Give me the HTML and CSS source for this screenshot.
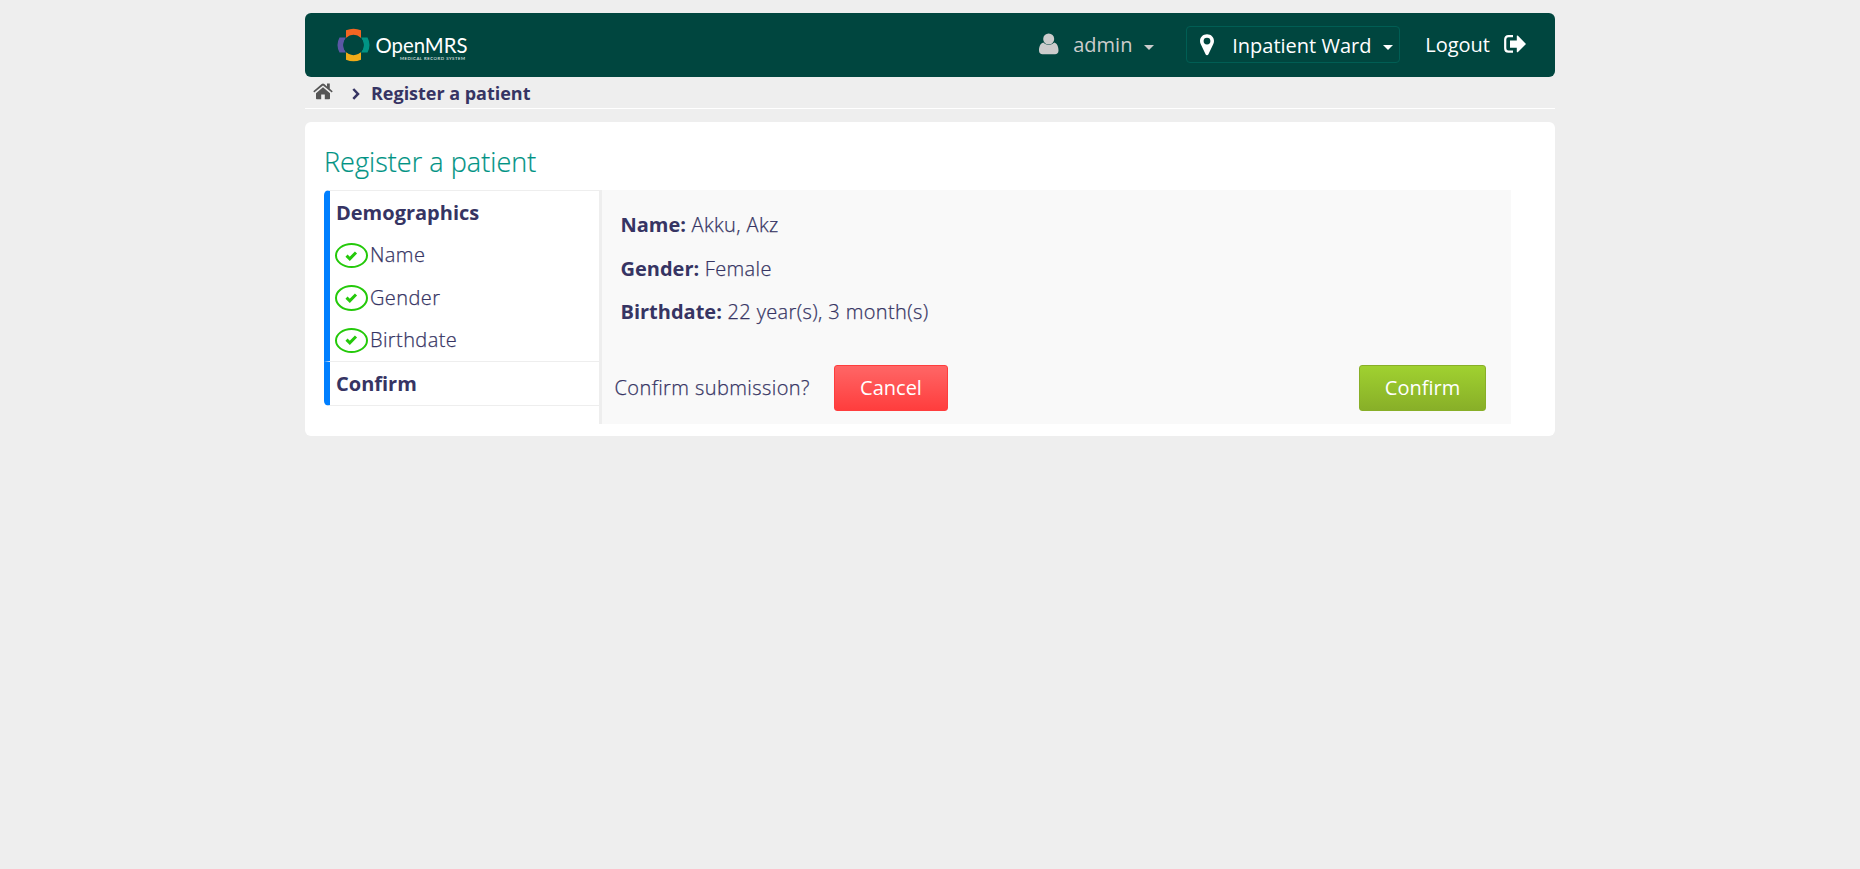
FILE: index.html
```html
<!DOCTYPE html>
<html lang="en">
<head>
<meta charset="utf-8">
<title>Register a patient</title>
<link rel="stylesheet" href="styles.css">
</head>
<body>
<div class="page">
  <header class="topbar">
    <svg class="logo" width="140" height="40" viewBox="0 0 140 40">
      <path fill="#f26522" d="M14 2.200Q21.500-.8 29 2.200V10.500Q21.500 4 14 10.500Z"/>
      <path fill="#f0ab18" d="M14 31.800Q21.500 34.800 29 31.800V23.500Q21.500 30 14 23.500Z"/>
      <path fill="#5b57a6" d="M7.500 9.500Q3.500 17 7.500 24.500H14Q8.500 17 14 9.500Z"/>
      <path fill="#009384" d="M35.500 9.500Q39.500 17 35.500 24.500H29Q34.500 17 29 9.500Z"/>
      <circle cx="21.500" cy="17" r="10.200" fill="#00463f"/>
      <text class="logo-name" x="43.500" y="24.800" textLength="92" lengthAdjust="spacingAndGlyphs">OpenMRS</text>
      <text class="logo-sub" x="68" y="32" textLength="65" lengthAdjust="spacing">MEDICAL RECORD SYSTEM</text>
    </svg>
    <div class="user">
      <svg class="user-icon" width="20" height="22" viewBox="0 0 20 22"><circle cx="9.700" cy="6" r="5.500"/><path d="M4.300 9.500C1.500 10.300 0 13.500 0 17.500 0 20 1.500 21.200 3.500 21.200H16C18 21.200 19.500 20 19.500 17.500 19.500 13.500 18 10.300 15.200 9.500 12 12.800 7.500 12.800 4.300 9.500Z"/></svg>
      <span class="user-name">admin</span>
      <i class="caret"></i>
    </div>
    <div class="location">
      <svg width="14" height="22" viewBox="0 0 14 22"><path fill-rule="evenodd" d="M7 .2C3 .2 0 3.100 0 7 0 8.300.3 9.200.8 10.200L5.700 20.500C6.200 21.500 7.800 21.500 8.300 20.500L13.200 10.200C13.700 9.200 14 8.300 14 7 14 3.100 11 .2 7 .2ZM7 3.700A3.400 3.400 0 1 1 7 10.500 3.400 3.400 0 0 1 7 3.700Z"/></svg>
      <span class="location-name">Inpatient Ward</span>
      <i class="caret"></i>
    </div>
    <div class="logout">
      <span>Logout</span>
      <svg width="23" height="18" viewBox="0 0 23 18"><path d="M9 1.200H4.500Q1.200 1.200 1.200 4.500V13.200Q1.200 16.600 4.500 16.600H9" fill="none" stroke="#fff" stroke-width="2.200"/><path d="M6 5.500H12.800V.8Q13.200.2 14 .8L22 8.900 14 17Q13.200 17.600 12.800 17V12.700H6Z"/></svg>
    </div>
  </header>

  <nav class="crumbs">
    <svg class="home" width="20" height="17" viewBox="0 0 20 17"><path d="M10 4.300 3 10.200V15.500Q3 16.300 3.800 16.300H8.200V11.500H11.800V16.300H16.200Q17 16.300 17 15.500V10.200Z"/><path d="M10 .5Q10.600.5 11.300 1.100L14 3.400V.6H16.800V5.800L19.700 8.200 18.800 9.500 10 2.500 1.200 9.500.3 8.200 8.700 1.100Q9.400.5 10 .5Z"/></svg>
    <svg class="chevron" width="8" height="12" viewBox="0 0 8 12"><path d="M1.300 1 6 5.900 1.300 10.800"/></svg>
    <span>Register a patient</span>
  </nav>

  <main class="card">
    <h2>Register a patient</h2>
    <div class="form">
      <ul class="steps">
        <li class="section">
          <div class="title">Demographics</div>
          <div class="step step-first"><span class="tick"><svg width="13" height="10" viewBox="0 0 13 10"><path d="M1.500 4.600 4.800 7.800 11 1.500"/></svg></span>Name</div>
          <div class="step"><span class="tick tick-tall"><svg width="13" height="10" viewBox="0 0 13 10"><path d="M1.500 4.600 4.800 7.800 11 1.500"/></svg></span>Gender</div>
          <div class="step step-end"><span class="tick"><svg width="13" height="10" viewBox="0 0 13 10"><path d="M1.500 4.600 4.800 7.800 11 1.500"/></svg></span>Birthdate</div>
        </li>
        <li class="section section-last">
          <div class="title">Confirm</div>
        </li>
      </ul>
      <section class="panel">
        <div class="summary">
          <p><b>Name:</b> Akku, Akz</p>
          <p><b>Gender:</b> Female</p>
          <p><b>Birthdate:</b> 22 year(s), 3 month(s)</p>
        </div>
        <div class="actions">
          <span class="question">Confirm submission?</span>
          <button class="btn cancel">Cancel</button>
          <button class="btn confirm">Confirm</button>
        </div>
      </section>
    </div>
  </main>
</div>
</body>
</html>
```
FILE: styles.css
```css
* { box-sizing: border-box; }
body {
  margin: 0;
  background: #eee;
  color: #363463;
  font-family: "Open Sans", sans-serif;
  font-size: 20px;
  font-weight: 300;
}
.page { width: 1250px; margin: 0 auto; padding-top: 13px; }

.topbar {
  display: flex;
  align-items: flex-start;
  height: 64px;
  padding: 13px 29px 0 27px;
  background: #00463f;
  border-radius: 6px;
  color: #fff;
  font-weight: 400;
  line-height: 37px;
}
.topbar svg { fill: #fff; flex: none; }
.logo { margin-top: 2px; }
.logo-name { font: 400 21px Lato, sans-serif; fill: #fff; }
.logo-sub { font: 400 4.300px Lato, sans-serif; fill: #fff; }
.user {
  display: flex;
  align-items: center;
  height: 37px;
  margin-left: auto;
  color: #ccc;
}
.topbar .user-icon { fill: #ccc; margin: 0 14px 2px 0; }
.user-name { width: 60px; white-space: nowrap; margin-top: -1px; }
.caret {
  border: 5px solid transparent;
  border-top-color: currentColor;
  border-bottom: 0;
  margin: 5px 0 0 11px;
}
.location {
  display: flex;
  align-items: center;
  width: 214px;
  height: 37px;
  margin-left: 32px;
  padding: 0 6px 0 13px;
  border: 1px solid #005e54;
  border-radius: 4px;
}
.location-name { width: 139px; margin: 2px 0 0 18px; white-space: nowrap; }
.location .caret { margin: 6px 0 0 auto; }
.logout { display: flex; align-items: center; height: 35px; margin-left: 25px; margin-right: -1px; }
.logout span { padding-top: 2px; }
.logout svg { margin-left: 14px; }

.crumbs {
  display: flex;
  align-items: center;
  height: 32px;
  padding: 0 8px 1px;
  border-bottom: 1px solid #fff;
  font-size: 18px;
  font-weight: 700;
}
.crumbs span { padding-top: 1px; letter-spacing: -.02px; }
.home { fill: #555; margin-bottom: 1px; }
.chevron {
  margin: 4px 11px 0 19px;
  fill: none;
  stroke: #363463;
  stroke-width: 2.500px;
}

.card {
  height: 314px;
  margin-top: 13px;
  padding: 20px 44px 12px 19px;
  background: #fff;
  border-radius: 6px;
}
h2 {
  height: 48px;
  margin: 0;
  color: #009384;
  font-size: 27px;
  font-weight: 300;
  line-height: 40px;
  letter-spacing: .04px;
  -webkit-text-stroke: .2px;
}
.form { display: flex; height: 234px; }
.steps { width: 275px; margin: 0; padding: 0; list-style: none; }
.section {
  border-top: 1px solid #eee;
  border-left: 6px solid #007fff;
  border-top-left-radius: 5px;
}
.section-last {
  border-bottom: 1px solid #eee;
  border-radius: 0 0 0 5px;
}
.title { height: 43px; padding-left: 6px; line-height: 43px; font-weight: 700; }
.step {
  display: flex;
  align-items: center;
  height: 44px;
  padding-left: 5px;
  letter-spacing: .4px;
  -webkit-text-stroke: .25px;
}
.step-first { height: 41px; }
.step-end { height: 42px; padding-bottom: 2px; }
.tick {
  display: flex;
  align-items: center;
  justify-content: center;
  width: 33px;
  height: 25px;
  margin: 2px 2px 0 0;
  border: 2px solid #24c90a;
  border-radius: 50%;
}
.tick-tall { height: 26px; }
.tick path { fill: none; stroke: #24c90a; stroke-width: 3px; }

.panel { flex: 1; border-left: 3px solid #eee; background: #f9f9f9; padding-top: 13px; }
.summary { height: 162px; padding-left: 18.500px; }
.summary p {
  margin: 0;
  height: 43.500px;
  line-height: 43.500px;
  letter-spacing: .38px;
  -webkit-text-stroke: .25px;
}
b { font-weight: 700; letter-spacing: 0; -webkit-text-stroke: 0; }
.actions { display: flex; align-items: center; height: 46px; padding: 0 25px 0 12.500px; }
.question { width: 219.500px; padding-bottom: 2px; letter-spacing: .42px; -webkit-text-stroke: .25px; }
.btn {
  height: 46px;
  padding: 0 0 2px;
  border: 1px solid;
  border-radius: 3px;
  color: #fff;
  font: 400 20px "Open Sans", sans-serif;
}
.cancel { width: 114px; border-color: #ff3d3d; background: linear-gradient(#ff6666, #ff3d3d); }
.confirm { width: 127px; margin-left: auto; border-color: #88af28; background: linear-gradient(#a0d130, #88af28); }
```
